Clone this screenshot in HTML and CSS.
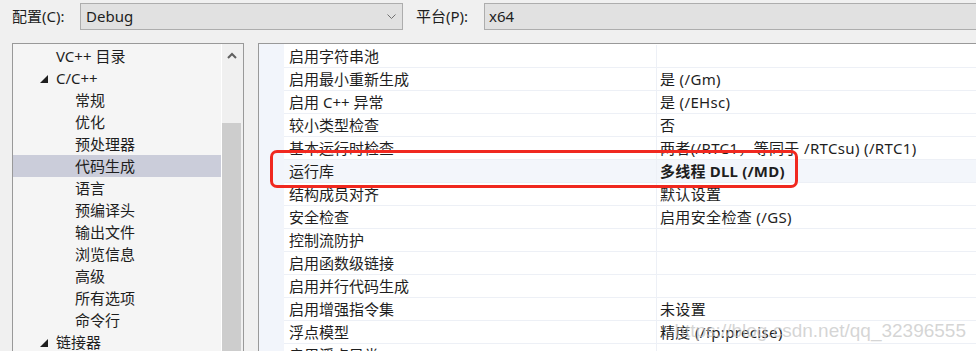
FILE: index.html
```html
<!DOCTYPE html>
<html lang="zh-CN">
<head>
<meta charset="utf-8">
<title>属性页</title>
<link rel="stylesheet" href="styles.css">
</head>
<body>
<div class="page">
  <div class="topbar">
    <span class="lbl">配置(C):</span>
    <div class="combo combo-config">
      <span class="combo-text">Debug</span>
      <svg class="chev" width="9" height="6" viewBox="0 0 9 6"><path d="M0.5 0.5 L4.5 4.5 L8.5 0.5" fill="none" stroke="#707070" stroke-width="1"/></svg>
    </div>
    <span class="lbl lbl-plat">平台(P):</span>
    <div class="combo combo-plat">
      <span class="combo-text">x64</span>
    </div>
  </div>
  <div class="main">
    <div class="tree-panel">
      <ul class="tree">
        <li class="node lvl1">VC++ 目录</li>
        <li class="node lvl1 expanded"><svg class="tri" width="8" height="8" viewBox="0 0 8 8"><path d="M8 0 L8 8 L0 8 Z" fill="#1e1e1e"/></svg>C/C++</li>
        <li class="node lvl2">常规</li>
        <li class="node lvl2">优化</li>
        <li class="node lvl2">预处理器</li>
        <li class="node lvl2 selected">代码生成</li>
        <li class="node lvl2">语言</li>
        <li class="node lvl2">预编译头</li>
        <li class="node lvl2">输出文件</li>
        <li class="node lvl2">浏览信息</li>
        <li class="node lvl2">高级</li>
        <li class="node lvl2">所有选项</li>
        <li class="node lvl2">命令行</li>
        <li class="node lvl1 expanded"><svg class="tri" width="8" height="8" viewBox="0 0 8 8"><path d="M8 0 L8 8 L0 8 Z" fill="#1e1e1e"/></svg>链接器</li>
      </ul>
      <div class="vscroll">
        <div class="sb-up"><svg width="10" height="7" viewBox="0 0 10 7"><path d="M1 6 L5 2 L9 6" fill="none" stroke="#606060" stroke-width="2"/></svg></div>
        <div class="sb-thumb"></div>
      </div>
    </div>
    <div class="grid-panel">
      <div class="gutter"></div>
      <div class="grid">
        <div class="row"><div class="name">启用字符串池</div><div class="val"></div></div>
        <div class="row"><div class="name">启用最小重新生成</div><div class="val">是 (/Gm)</div></div>
        <div class="row"><div class="name">启用 C++ 异常</div><div class="val">是 (/EHsc)</div></div>
        <div class="row"><div class="name">较小类型检查</div><div class="val">否</div></div>
        <div class="row"><div class="name">基本运行时检查</div><div class="val">两者(/RTC1，等同于 /RTCsu) (/RTC1)</div></div>
        <div class="row current"><div class="name">运行库</div><div class="val strong">多线程 DLL (/MD)</div></div>
        <div class="row"><div class="name">结构成员对齐</div><div class="val">默认设置</div></div>
        <div class="row"><div class="name">安全检查</div><div class="val">启用安全检查 (/GS)</div></div>
        <div class="row"><div class="name">控制流防护</div><div class="val"></div></div>
        <div class="row"><div class="name">启用函数级链接</div><div class="val"></div></div>
        <div class="row"><div class="name">启用并行代码生成</div><div class="val"></div></div>
        <div class="row"><div class="name">启用增强指令集</div><div class="val">未设置</div></div>
        <div class="row"><div class="name">浮点模型</div><div class="val">精度 (/fp:precise)</div></div>
        <div class="row"><div class="name">启用浮点异常</div><div class="val"></div></div>
      </div>
      <div class="redbox"></div>
      <div class="watermark">https://blog.csdn.net/qq_32396555</div>
    </div>
  </div>
</div>
</body>
</html>
```

FILE: styles.css
```css
html, body {
  margin: 0;
  padding: 0;
}

body {
  width: 976px;
  height: 351px;
  overflow: hidden;
  background: #f0f0f0;
  font-family: "Noto Sans", "Noto Sans CJK SC", sans-serif;
  font-size: 15px;
  color: #1e1e1e;
}

.page {
  width: 976px;
  height: 351px;
  display: flex;
  flex-direction: column;
}

/* ---------- top bar ---------- */
.topbar {
  display: flex;
  align-items: center;
  height: 27px;
  padding: 3px 0 13px 12px;
  flex: none;
}

.lbl {
  width: 68px;
  flex: none;
  line-height: 27px;
  white-space: nowrap;
}

.lbl-plat {
  margin-left: 13px;
  width: 68px;
}

.combo {
  box-sizing: border-box;
  height: 27px;
  border: 1px solid #adadad;
  background: #e1e1e1;
  display: flex;
  align-items: center;
  padding-left: 5px;
  flex: none;
}

.combo-config {
  width: 323px;
  justify-content: space-between;
  padding-right: 6px;
}

.combo-plat {
  width: 520px;
  padding-left: 4px;
}

.combo-text {
  line-height: 25px;
}

.chev {
  display: block;
  margin-top: 1px;
}

/* ---------- main ---------- */
.main {
  flex: 1;
  display: flex;
  min-height: 0;
}

.tree-panel {
  box-sizing: border-box;
  width: 232px;
  margin-left: 12px;
  height: 320px;
  border: 1px solid #999999;
  border-bottom: none;
  background: #f5f5f5;
  display: flex;
  flex: none;
}

.tree {
  list-style: none;
  margin: 0;
  padding: 1px 0 0 0;
  width: 208px;
  border-right: 1px solid #ffffff;
  flex: none;
}

.node {
  height: 22px;
  line-height: 22px;
  white-space: nowrap;
  display: flex;
  align-items: center;
}

.lvl1 {
  padding-left: 43px;
}

.lvl1.expanded {
  padding-left: 27px;
}

.tri {
  display: block;
  width: 8px;
  height: 8px;
  margin-right: 8px;
  margin-top: 1px;
}

.lvl2 {
  padding-left: 62px;
}

.selected {
  background: #cbcdda;
}

.vscroll {
  width: 21px;
  background: #f0f0f0;
  display: flex;
  flex-direction: column;
  flex: none;
}

.sb-up {
  height: 79px;
  display: flex;
  justify-content: center;
  padding-top: 8px;
  box-sizing: border-box;
  padding-right: 2px;
}

.sb-up svg {
  display: block;
}

.sb-thumb {
  width: 19px;
  flex: 1;
  background: #cdcdcd;
}

/* ---------- property grid ---------- */
.grid-panel {
  position: relative;
  box-sizing: border-box;
  margin-left: 14px;
  width: 730px;
  height: 320px;
  border: 1px solid #999999;
  border-bottom: none;
  border-right: none;
  background: #ffffff;
  display: flex;
  flex: none;
  overflow: hidden;
}

.gutter {
  width: 25px;
  flex: none;
  background: #f2f5fb;
}

.grid {
  flex: 1;
  padding-top: 1px;
}

.row {
  display: flex;
  height: 23px;
  box-sizing: border-box;
  border-bottom: 1px solid #edf0f6;
}

.row.current {
  background: #f3f6fb;
}

.name {
  width: 373px;
  box-sizing: border-box;
  padding-left: 5px;
  line-height: 22px;
  border-right: 1px solid #edf0f6;
  white-space: nowrap;
  flex: none;
}

.val {
  flex: 1;
  padding-left: 3px;
  line-height: 22px;
  white-space: nowrap;
  letter-spacing: 0.35px;
}

.val.strong {
  font-weight: bold;
  letter-spacing: 0.2px;
}

.redbox {
  position: absolute;
  left: 11px;
  top: 106px;
  width: 528px;
  height: 38px;
  box-sizing: border-box;
  border: 3.5px solid #f0281f;
  border-radius: 7px;
}

.watermark {
  position: absolute;
  right: 22px;
  top: 275px;
  font-family: "Liberation Sans", Arial, sans-serif;
  font-size: 19px;
  line-height: 24px;
  color: rgba(195, 195, 195, 0.7);
  white-space: nowrap;
}
```
